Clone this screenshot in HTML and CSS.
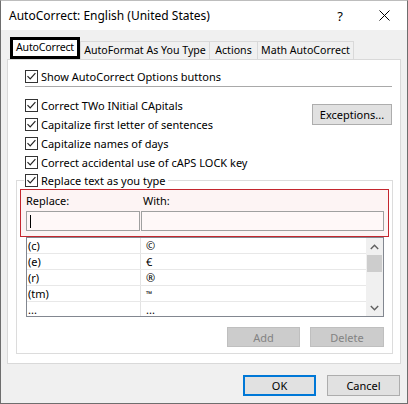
FILE: index.html
```html
<!DOCTYPE html>
<html>
<head>
<meta charset="utf-8">
<link rel="stylesheet" href="styles.css">
</head>
<body>
<div class="window">
  <div class="titlebar">
    <span class="title">AutoCorrect: English (United States)</span>
    <span class="help">?</span>
    <span class="close"><svg width="11" height="11" viewBox="0 0 11 11"><path d="M0.5 0.5 L10.5 10.5 M10.5 0.5 L0.5 10.5" stroke="#000" stroke-width="1" fill="none"/></svg></span>
  </div>
  <div class="tabs">
    <div class="tab active">AutoCorrect</div>
    <div class="tab t2">AutoFormat As You Type</div>
    <div class="tab t3">Actions</div>
    <div class="tab t4">Math AutoCorrect</div>
  </div>
  <div class="panel">
    <div class="top">
      <div class="check"><span class="box"><svg width="13" height="13" viewBox="0 0 13 13"><path d="M2.5 6.2 L5.2 8.9 L10.4 3.2" stroke="#222" stroke-width="1.2" fill="none"/></svg></span>Show AutoCorrect Options buttons</div>
      <div class="sep"></div>
      <div class="opts">
        <div class="opt-list">
          <div class="check"><span class="box"><svg width="13" height="13" viewBox="0 0 13 13"><path d="M2.5 6.2 L5.2 8.9 L10.4 3.2" stroke="#222" stroke-width="1.2" fill="none"/></svg></span>Correct TWo INitial CApitals</div>
          <div class="check"><span class="box"><svg width="13" height="13" viewBox="0 0 13 13"><path d="M2.5 6.2 L5.2 8.9 L10.4 3.2" stroke="#222" stroke-width="1.2" fill="none"/></svg></span>Capitalize first letter of sentences</div>
          <div class="check"><span class="box"><svg width="13" height="13" viewBox="0 0 13 13"><path d="M2.5 6.2 L5.2 8.9 L10.4 3.2" stroke="#222" stroke-width="1.2" fill="none"/></svg></span>Capitalize names of days</div>
          <div class="check"><span class="box"><svg width="13" height="13" viewBox="0 0 13 13"><path d="M2.5 6.2 L5.2 8.9 L10.4 3.2" stroke="#222" stroke-width="1.2" fill="none"/></svg></span>Correct accidental use of cAPS LOCK key</div>
        </div>
        <div class="btn exceptions">Exceptions...</div>
      </div>
    </div>
    <fieldset class="group">
      <legend class="check legend"><span class="box"><svg width="13" height="13" viewBox="0 0 13 13"><path d="M2.5 6.2 L5.2 8.9 L10.4 3.2" stroke="#222" stroke-width="1.2" fill="none"/></svg></span>Replace text as you type</legend>
      <div class="highlight">
        <div class="labels"><span class="lbl-replace">Replace:</span><span class="lbl-with">With:</span></div>
        <div class="inputs">
          <div class="input replace"><span class="caret"></span></div>
          <div class="input with"></div>
        </div>
      </div>
      <div class="list">
        <div class="rows">
          <div class="row"><span class="c1">(c)</span><span class="c2">©</span></div>
          <div class="row"><span class="c1">(e)</span><span class="c2">€</span></div>
          <div class="row"><span class="c1">(r)</span><span class="c2">®</span></div>
          <div class="row"><span class="c1">(tm)</span><span class="c2 tm">™</span></div>
          <div class="row"><span class="c1">...</span><span class="c2">...</span></div>
        </div>
        <div class="scrollbar">
          <span class="arrow"><svg width="9" height="6" viewBox="0 0 9 6"><path d="M0.8 5 L4.5 1.2 L8.2 5" stroke="#606060" stroke-width="1.4" fill="none"/></svg></span>
          <span class="thumb"></span>
          <span class="track"></span>
          <span class="arrow"><svg width="9" height="6" viewBox="0 0 9 6"><path d="M0.8 1 L4.5 4.8 L8.2 1" stroke="#606060" stroke-width="1.4" fill="none"/></svg></span>
        </div>
      </div>
      <div class="actions">
        <div class="btn disabled add">Add</div>
        <div class="btn disabled del">Delete</div>
      </div>
    </fieldset>
  </div>
  <div class="footer">
    <div class="btn ok">OK</div>
    <div class="btn cancel">Cancel</div>
  </div>
</div>
</body>
</html>
```
FILE: styles.css
```css
* { box-sizing: border-box; }
html, body { margin: 0; padding: 0; background: #f0f0f0; }
body {
  font-family: "Noto Sans", "Open Sans", sans-serif;
  font-size: 11px;
  color: #000;
}
.window {
  width: 408px;
  height: 404px;
  background: #f0f0f0;
  border: 1px solid #6e6e6e;
  border-top-color: #bdbdbd;
  display: flex;
  flex-direction: column;
}
.titlebar {
  height: 29px;
  background: #fff;
  display: flex;
  align-items: center;
  padding-left: 8px;
  font-size: 12px;
}
.title { flex: 1; }
.help { width: 14px; text-align: center; margin-right: 32px; font-size: 13px; }
.close { width: 11px; height: 11px; margin-right: 17px; display: flex; }
.tabs {
  height: 29px;
  display: flex;
  align-items: flex-end;
  padding-left: 9px;
  font-size: 10.6px;
}
.tab {
  height: 18px;
  border: 1px solid #d9d9d9;
  border-bottom: none;
  background: #f0f0f0;
  display: flex;
  align-items: center;
  justify-content: center;
  padding-bottom: 1px;
  white-space: nowrap;
}
.tab.active {
  width: 70px;
  height: 22px;
  border: 3px solid #000;
  background: #fff;
  padding-bottom: 2px;
  letter-spacing: -0.2px;
}
.t2 { width: 130px; }
.t3 { width: 49px; margin-left: -1px; }
.t4 { width: 97px; margin-left: -1px; }
.panel {
  margin: 0 6px 0 6px;
  background: #fff;
  border: 1px solid #d9d9d9;
}
.top { padding: 7px 8px 0 17px; }
.check {
  display: flex;
  align-items: center;
  height: 19px;
  gap: 3px;
  white-space: nowrap;
}
.box {
  width: 13px;
  height: 13px;
  border: 1px solid #333;
  display: flex;
  align-items: center;
  justify-content: center;
  background: #fff;
}
.box svg { display: block; margin: -1px; }
.sep { height: 1px; background: #a9a9a9; margin-bottom: 9px; }
.opts { display: flex; justify-content: space-between; align-items: flex-start; }
.btn {
  display: flex;
  align-items: center;
  justify-content: center;
  background: #e1e1e1;
  border: 1px solid #adadad;
  white-space: nowrap;
}
.exceptions { width: 80px; height: 21px; margin-top: 8px; }
.group {
  margin: -1px 7px 9px 8px;
  padding: 0 0 6px 0;
  border: 1px solid #dcdcdc;
  min-width: 0;
}
.legend {
  margin-left: 7px;
  padding: 0 2px 0 1px;
  background: #fff;
}
.highlight {
  margin: -1px 3px 0 3px;
  border: 1px solid #c4262e;
  background: #fdf4f4;
  padding: 0 4px 5px 5px;
}
.labels { height: 21px; display: flex; align-items: center; padding-bottom: 1px; }
.lbl-replace { width: 117px; }
.inputs { display: flex; gap: 1px; }
.input {
  height: 20px;
  border: 1px solid #a0a0a0;
  background: #fff8f8;
  display: flex;
  align-items: center;
}
.replace { width: 114px; }
.with { flex: 1; }
.caret { width: 1px; height: 13px; background: #000; margin-left: 3px; }
.list {
  margin: 0 8px 0 9px;
  height: 80px;
  border: 1px solid #828790;
  background: #fff;
  display: flex;
  overflow: hidden;
}
.rows { flex: 1; }
.row {
  height: 16px;
  display: flex;
  border-bottom: 1px solid #e8e8e8;
  align-items: center;
}
.c1 {
  width: 114px;
  height: 100%;
  border-right: 1px solid #e3e3e3;
  padding-left: 1px;
  display: flex;
  align-items: center;
}
.c2 { padding-left: 5px; }
.tm { font-size: 8px; }
.scrollbar {
  width: 17px;
  background: #f0f0f0;
  display: flex;
  flex-direction: column;
  align-items: center;
}
.arrow { height: 17px; display: flex; align-items: center; justify-content: center; }
.thumb { width: 15px; height: 17px; background: #cdcdcd; }
.track { flex: 1; }
.actions {
  display: flex;
  justify-content: flex-end;
  gap: 10px;
  margin: 10px 8px 0 0;
}
.disabled {
  height: 20px;
  background: #cccccc;
  border-color: #bfbfbf;
  color: #838383;
}
.add { width: 73px; }
.del { width: 74px; }
.footer {
  display: flex;
  justify-content: flex-end;
  gap: 11px;
  padding: 11px 7px 0 0;
}
.ok, .cancel { width: 73px; height: 21px; }
.ok { border: 2px solid #0078d7; }
```
